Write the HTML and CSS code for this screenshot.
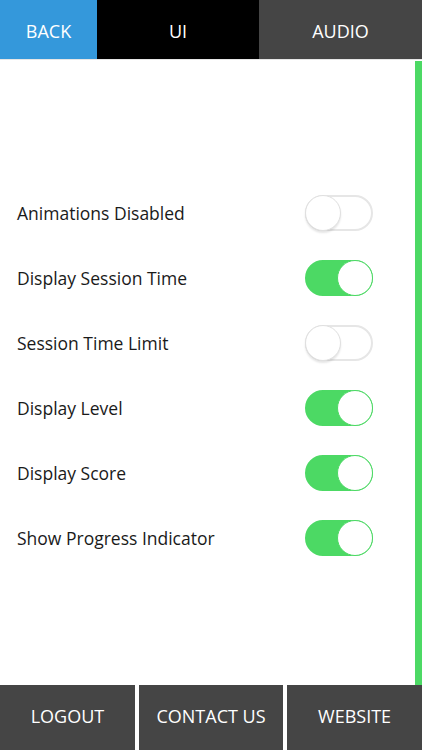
FILE: index.html
```html
<!DOCTYPE html>
<html lang="en">
<head>
  <meta charset="UTF-8">
  <title>Settings</title>
  <link rel="stylesheet" href="styles.css">
</head>
<body>
  <div class="screen">
    <!-- Top tabs -->
    <nav class="tabs">
      <div class="tab tab-back">BACK</div>
      <div class="tab tab-ui">UI</div>
      <div class="tab tab-audio">AUDIO</div>
    </nav>

    <main class="content">
      <div class="settings">
        <div class="setting">
          <span>Animations Disabled</span>
          <div class="switch"><div class="knob"></div></div>
        </div>
        <div class="setting">
          <span>Display Session Time</span>
          <div class="switch on"><div class="knob"></div></div>
        </div>
        <div class="setting">
          <span>Session Time Limit</span>
          <div class="switch"><div class="knob"></div></div>
        </div>
        <div class="setting">
          <span>Display Level</span>
          <div class="switch on"><div class="knob"></div></div>
        </div>
        <div class="setting">
          <span>Display Score</span>
          <div class="switch on"><div class="knob"></div></div>
        </div>
        <div class="setting">
          <span>Show Progress Indicator</span>
          <div class="switch on"><div class="knob"></div></div>
        </div>
      </div>
      <div class="scrollbar"></div>
    </main>

    <!-- Bottom buttons -->
    <footer class="footer">
      <div class="foot-btn">LOGOUT</div>
      <div class="foot-btn">CONTACT US</div>
      <div class="foot-btn">WEBSITE</div>
    </footer>
  </div>
</body>
</html>
```

FILE: styles.css
```css
/* Reset */
* { box-sizing: border-box; margin: 0; padding: 0; }
html, body {
  width: 100%; height: 100%;
  background: #fff;
  font-family: 'Open Sans', sans-serif;
}

.screen {
  display: flex;
  flex-direction: column;
  height: 750px;
}

/* Top tab bar */
.tabs {
  display: flex;
  height: 60px;
  border-bottom: 1px solid #e6e6e6;
}
.tab {
  display: flex;
  justify-content: center;
  align-items: center;
  padding-top: 2px;
  color: #fff;
  font-size: 18px;
}
.tab-back  { width: 97px;  background: #3498db; }
.tab-ui    { width: 162px; background: #000; }
.tab-audio { flex: 1;      background: #454545; }

/* Settings list */
.content {
  flex: 1;
  display: flex;
  padding-top: 1px;
}
.settings {
  flex: 1;
  padding: 119px 42px 0 17px;
}
.setting {
  height: 65px;
  display: flex;
  justify-content: space-between;
  align-items: center;
  font-size: 17.5px;
  color: #1a1a1a;
}

/* iOS style switch */
.switch {
  position: relative;
  width: 68px;
  height: 36px;
  border-radius: 18px;
  background: #fff;
  border: 2px solid #e6e6e6;
}
.switch .knob {
  position: absolute;
  top: -2px; left: -2px;
  width: 36px;
  height: 36px;
  border-radius: 50%;
  background: #fff;
  border: 1px solid #e0e0e0;
  box-shadow: 0 2px 2px rgba(0, 0, 0, 0.1);
}
.switch.on {
  background: #4cd964;
  border-color: #4cd964;
}
.switch.on .knob {
  left: auto;
  right: -2px;
  border-color: #4cd964;
  box-shadow: none;
}

/* green scroll indicator */
.scrollbar {
  width: 7px;
  background: #4cd964;
}

/* Bottom buttons */
.footer {
  display: flex;
  gap: 4px;
  height: 65px;
}
.foot-btn {
  flex: 1;
  display: flex;
  justify-content: center;
  align-items: center;
  padding-bottom: 3px;
  background: #454545;
  color: #fff;
  font-size: 18px;
}
.foot-btn:nth-child(2) { flex: 1.07; }
```
